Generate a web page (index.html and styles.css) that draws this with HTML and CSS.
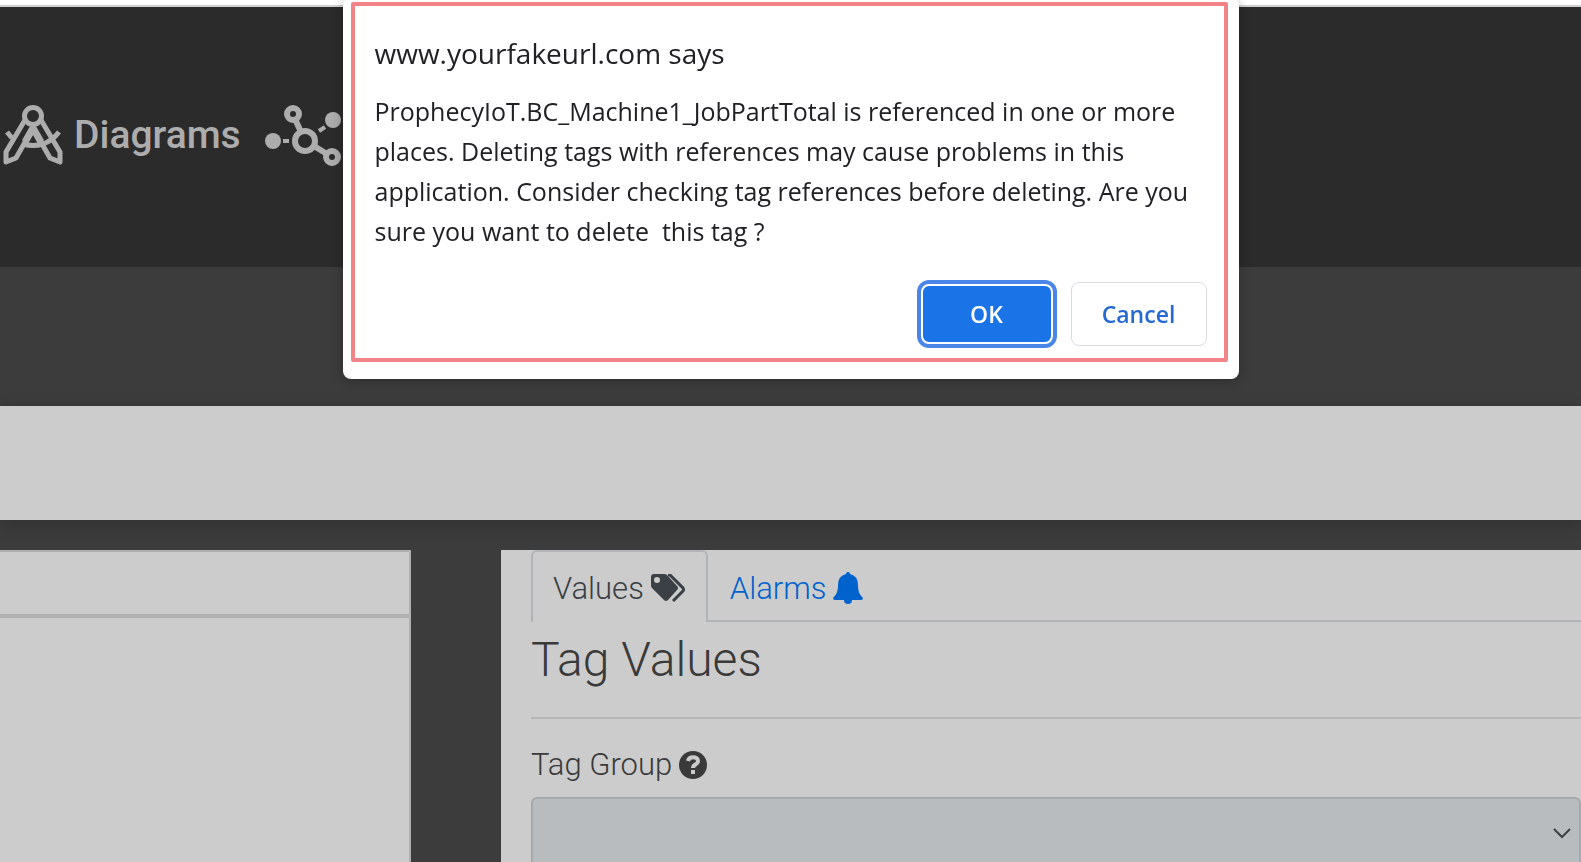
FILE: index.html
```html
<!DOCTYPE html>
<html lang="en">
<head>
  <meta charset="UTF-8" />
  <meta name="viewport" content="width=device-width, initial-scale=1.0" />
  <title>Tag Values</title>
  <link rel="stylesheet" href="styles.css">
</head>
<body>
  <header class="header">
    <nav class="nav">
      <a href="#" class="nav-link">
        <svg class="nav-icon" width="62" height="62" viewBox="0 0 62 62" fill="none" stroke="#adadad" stroke-width="5" stroke-linejoin="round">
          <circle cx="31" cy="12" r="8.5"/>
          <path d="M23 16L4 48V58L14 54L31 24L48 54L58 58V48L39 16"/>
          <path d="M31 24L23 38M31 24L39 38" stroke-width="7"/>
          <path d="M5 28L10 34M21 40Q31 43 41 40Q50 37 57 28" stroke-width="5"/>
        </svg>
        <span>Diagrams</span>
      </a>
      <a href="#" class="nav-link" aria-label="Network">
        <svg class="nav-icon" width="78" height="62" viewBox="0 0 78 62" fill="none" stroke="#adadad" stroke-width="6">
          <circle cx="40" cy="37" r="10"/>
          <circle cx="28" cy="10" r="6"/>
          <circle cx="67" cy="53" r="6"/>
          <path d="M30 15L36 28M49 42L62 50"/>
          <path d="M18 37H24M54 27L60 23" stroke-width="4"/>
          <circle cx="8" cy="37" r="8" fill="#adadad" stroke="none"/>
          <circle cx="68" cy="16" r="8" fill="#adadad" stroke="none"/>
        </svg>
      </a>
    </nav>
  </header>
  <div class="subheader"></div>
  <div class="toolbar"></div>

  <main class="main">
    <aside class="sidebar">
      <div class="sidebar-header"></div>
    </aside>

    <section class="content">
      <nav class="tabs">
        <a href="#" class="tab active">
          <span>Values</span>
          <svg width="35" height="28" viewBox="0 0 35 28">
            <path fill="#3a4045" fill-rule="evenodd" d="M3 0H13Q15 0 16 1L26 12Q28 14 26 16L17 26Q15 28 13 26L1 14Q0 13 0 11V3Q0 0 3 0ZM6 3A3 3 0 1 0 6 9A3 3 0 1 0 6 3Z"/>
            <path fill="none" stroke="#3a4045" stroke-width="3" d="M17 1H19L32 14Q33 16 32 17L22 27"/>
          </svg>
        </a>
        <a href="#" class="tab">
          <span>Alarms</span>
          <svg width="30" height="32" viewBox="0 0 30 32" fill="#0062cc">
            <path d="M13 2Q13 0 15 0Q17 0 17 2Q25 4 25 13C25 20 27 23 30 26Q30 28 28 28H2Q0 28 0 26C3 23 5 20 5 13Q5 4 13 2Z"/>
            <path d="M11 28H19Q19 32 15 32Q11 32 11 28Z"/>
          </svg>
        </a>
      </nav>

      <h1 class="title">Tag Values</h1>

      <label class="label" for="tagGroup">
        <span>Tag Group</span>
        <svg width="28" height="28" viewBox="0 0 28 28">
          <circle cx="14" cy="14" r="14" fill="#3a3a3a"/>
          <path d="M9 10C10 5 19 5 19 10C19 14 14 13 14 17" fill="none" stroke="#cbcbcb" stroke-width="4"/>
          <path d="M12 19H16V23H12Z" fill="#cbcbcb"/>
        </svg>
      </label>
      <div class="select-wrap">
        <select class="select" id="tagGroup"><option></option></select>
        <svg class="chevron" width="18" height="11" viewBox="0 0 18 11">
          <path d="M1 1L9 9L17 1" fill="none" stroke="#3e4042" stroke-width="2"/>
        </svg>
      </div>
    </section>
  </main>

  <div class="dialog" role="alertdialog" aria-labelledby="dialogTitle" aria-describedby="dialogText">
    <div class="dialog-frame">
      <h2 class="dialog-title" id="dialogTitle">www.yourfakeurl.com says</h2>
      <p class="dialog-text" id="dialogText">ProphecyIoT.BC_Machine1_JobPartTotal is referenced in one or more
places. Deleting tags with references may cause problems in this
application. Consider checking tag references before deleting. Are you
sure you want to delete  this tag ?</p>
      <div class="dialog-buttons">
        <button type="button" class="btn btn-ok">OK</button>
        <button type="button" class="btn btn-cancel">Cancel</button>
      </div>
    </div>
  </div>
</body>
</html>
```
FILE: styles.css
```css
* {
  box-sizing: border-box;
}
body {
  margin: 0;
  height: 100vh;
  display: flex;
  flex-direction: column;
  overflow: hidden;
  font-family: Roboto, sans-serif;
  font-weight: 300;
  color: #3a3a3a;
  background: #3c3c3c;
  border-top: 5px solid #fff;
}
.header {
  flex: 0 0 262px;
  display: flex;
  align-items: center;
  padding-bottom: 4px;
  background: #2b2b2b;
  border-top: 2px solid #d0d0d0;
}
.nav {
  display: flex;
  gap: 24px;
  padding-left: 2px;
}
.nav-link {
  display: flex;
  align-items: center;
  gap: 10px;
  font-size: 39px;
  font-weight: 500;
  color: #adadad;
  text-decoration: none;
}
.nav-icon {
  flex: none;
}
.subheader {
  flex: 0 0 139px;
}
.toolbar {
  flex: 0 0 114px;
  background: #ccc;
  box-shadow: 0 4px 16px rgba(0, 10, 0, 0.2);
}
.main {
  flex: 1;
  display: flex;
  gap: 90px;
  padding-top: 30px;
}
.sidebar {
  width: 26%;
  background: #ccc;
  border: 2px solid #b0b0b0;
  border-width: 2px 2px 0 0;
}
.sidebar-header {
  height: 66px;
  border-bottom: 4px solid #b0b0b0;
}
.content {
  flex: 1;
  padding-left: 30px;
  background: #ccc;
}

.tabs {
  display: flex;
  height: 72px;
  border-bottom: 2px solid #b1b5b8;
}
.tab {
  display: flex;
  align-items: center;
  gap: 7px;
  height: 72px;
  padding: 2px 20px 0;
  border: 2px solid transparent;
  border-bottom: 0;
  border-radius: 6px 6px 0 0;
  font-size: 31px;
  color: #0062cc;
  text-decoration: none;
}
.tab.active {
  color: #3a4045;
  background: #ccc;
  border-color: #b1b5b8;
}
.title {
  margin: 0;
  padding: 8px 0 27px;
  font-size: 48px;
  line-height: 60px;
  font-weight: 300;
  border-bottom: 2px solid #b5b5b5;
}
.label {
  display: flex;
  align-items: center;
  gap: 7px;
  padding: 26px 0 12px;
  font-size: 31px;
  line-height: 40px;
}
.select-wrap {
  position: relative;
}
.select {
  display: block;
  width: 100%;
  height: 72px;
  appearance: none;
  background: #b8bcbf;
  border: 2px solid #a4a9ad;
  border-radius: 6px;
}
.chevron {
  position: absolute;
  right: 10px;
  top: 31px;
  pointer-events: none;
}

.dialog {
  position: fixed;
  top: -2px;
  left: 50%;
  width: 896px;
  margin-left: -448px;
  padding: 4px 11px 17px 8px;
  background: #fff;
  border-radius: 8px;
  box-shadow: 0 2px 12px rgba(0, 10, 0, 0.3);
  font-family: "Open Sans", "Noto Sans", sans-serif;
  font-weight: 400;
  color: #202124;
}
.dialog-frame {
  padding: 27px 17px 8px 20px;
  border: 4px solid #f28488;
  border-radius: 2px;
}
.dialog-title {
  margin: 0;
  font-size: 28px;
  line-height: 40px;
  font-weight: 400;
}
.dialog-text {
  margin: 18px 0 27px;
  font-size: 25px;
  line-height: 40px;
  white-space: pre;
}
.dialog-buttons {
  display: flex;
  align-items: center;
  justify-content: flex-end;
  gap: 18px;
  padding: 4px 0;
}
.btn {
  width: 136px;
  height: 64px;
  font-family: inherit;
  font-size: 23px;
  font-weight: 600;
  border-radius: 8px;
}
.btn-ok {
  width: 132px;
  height: 60px;
  color: #fff;
  background: #1b73e8;
  border: 2px solid #fff;
  box-shadow: 0 0 0 4px #4a86e8;
}
.btn-cancel {
  color: #2569d2;
  background: #fff;
  border: 1px solid #dadce0;
}
```
